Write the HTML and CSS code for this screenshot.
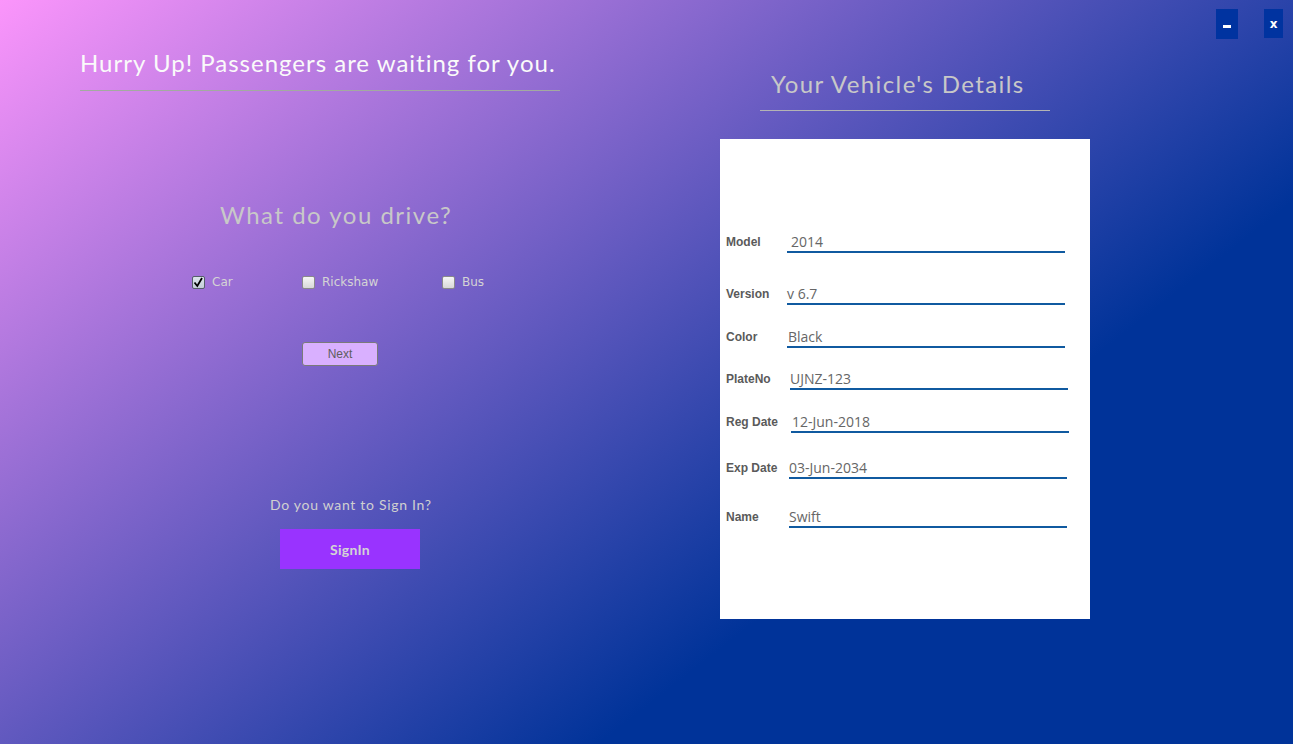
FILE: index.html
```html
<!DOCTYPE html>
<html>
<head>
<meta charset="utf-8">
<title>Driver Sign Up</title>
<link rel="stylesheet" href="styles.css">
</head>
<body>
<div class="page">
  <section class="left">
    <h1 class="title">Hurry Up! Passengers are waiting for you.</h1>
    <h2 class="question">What do you drive?</h2>
    <div class="choices">
      <label class="choice"><span class="box checked"><svg viewBox="0 0 13 13" width="13" height="13"><path d="M2.5 6.5 L5.3 10 L10 2" fill="none" stroke="#000" stroke-width="1.8"/></svg></span><span class="choice-text">Car</span></label>
      <label class="choice"><span class="box"></span><span class="choice-text">Rickshaw</span></label>
      <label class="choice"><span class="box"></span><span class="choice-text">Bus</span></label>
    </div>
    <button class="next">Next</button>
    <p class="signin-q">Do you want to Sign In?</p>
    <button class="signin">SignIn</button>
  </section>
  <section class="right">
    <h2 class="heading">Your Vehicle's Details</h2>
    <div class="panel">
      <div class="row r-model"><span class="lbl">Model</span><span class="field f-model">2014</span></div>
      <div class="row r-version"><span class="lbl">Version</span><span class="field f-version">v 6.7</span></div>
      <div class="row r-color"><span class="lbl">Color</span><span class="field f-color">Black</span></div>
      <div class="row r-plate"><span class="lbl">PlateNo</span><span class="field f-plate">UJNZ-123</span></div>
      <div class="row r-reg"><span class="lbl">Reg Date</span><span class="field f-reg">12-Jun-2018</span></div>
      <div class="row r-exp"><span class="lbl">Exp Date</span><span class="field f-exp">03-Jun-2034</span></div>
      <div class="row r-name"><span class="lbl">Name</span><span class="field f-name">Swift</span></div>
    </div>
  </section>
  <div class="controls">
    <button class="ctl ctl-min"><span class="dash"></span></button>
    <button class="ctl ctl-close">x</button>
  </div>
</div>
</body>
</html>
```

FILE: styles.css
```css
html, body {
  margin: 0;
  padding: 0;
}
body {
  width: 1293px;
  height: 744px;
  overflow: hidden;
  background: linear-gradient(142deg, #fb95fb 0px, #003399 955px);
  font-family: "Lato", "Open Sans", sans-serif;
}
.page {
  display: flex;
  height: 744px;
}
.left {
  width: 640px;
  padding: 48px 0 0 80px;
  display: flex;
  flex-direction: column;
  align-items: flex-start;
}
.title {
  margin: 0;
  width: 480px;
  padding-bottom: 12px;
  border-bottom: 1px solid #a3aaa0;
  font-weight: normal;
  font-size: 24px;
  line-height: 30px;
  letter-spacing: 1px;
  color: #fafafa;
  white-space: nowrap;
}
.question {
  margin: 109px 0 0 140px;
  font-weight: normal;
  font-size: 24px;
  line-height: 30px;
  letter-spacing: 1.5px;
  color: #c8c8c8;
}
.choices {
  margin: 44px 0 0 112px;
  display: grid;
  grid-template-columns: 110px 140px auto;
  font-family: "DejaVu Sans", sans-serif;
  font-size: 12px;
  color: #d4d4d4;
}
.choice {
  display: flex;
  align-items: center;
  gap: 7px;
  height: 16px;
}
.box {
  width: 11px;
  height: 11px;
  border: 1px solid #8a8a8a;
  border-radius: 2px;
  background: linear-gradient(#f6f6f6, #d8d8d8);
  position: relative;
}
.box.checked {
  background: linear-gradient(#dce4ec, #c4ced8);
  border-color: #55606a;
}
.box svg {
  position: absolute;
  left: -1px;
  top: -1px;
}
.next {
  margin: 52px 0 0 222px;
  width: 76px;
  height: 24px;
  background: #d9b0ff;
  border: 1px solid #7a7a7a;
  border-radius: 3px;
  font-family: "Liberation Sans", sans-serif;
  font-size: 12px;
  color: #5e5e5e;
  padding: 0;
}
.signin-q {
  margin: 130px 0 0 190px;
  font-size: 14px;
  line-height: 18px;
  letter-spacing: 0.7px;
  color: #d0d0d0;
}
.signin {
  margin: 15px 0 0 200px;
  width: 140px;
  height: 40px;
  background: #9933ff;
  border: none;
  font-family: "Lato", sans-serif;
  font-weight: bold;
  font-size: 14px;
  letter-spacing: 0.3px;
  color: #d4d4d4;
  padding: 0;
}
.right {
  width: 370px;
  display: flex;
  flex-direction: column;
  align-items: flex-start;
  padding-top: 69px;
}
.heading {
  margin: 0 0 0 40px;
  width: 279px;
  padding: 0 0 11px 11px;
  border-bottom: 1px solid #b4b4b4;
  font-weight: normal;
  font-size: 24px;
  line-height: 30px;
  letter-spacing: 1.4px;
  color: #c8c8c8;
  white-space: nowrap;
}
.panel {
  margin-top: 28px;
  width: 364px;
  height: 480px;
  background: #ffffff;
  padding-left: 6px;
  display: flex;
  flex-direction: column;
}
.row {
  display: flex;
  align-items: center;
}
.lbl {
  font-family: "Liberation Sans", sans-serif;
  font-weight: bold;
  font-size: 12px;
  color: #5a5a5a;
  width: 61px;
  white-space: nowrap;
}
.field {
  box-sizing: border-box;
  height: 23px;
  line-height: 23px;
  width: 278px;
  border-bottom: 2px solid #105aa0;
  font-family: "Open Sans", sans-serif;
  font-size: 14px;
  color: #666666;
}
.r-model { margin-top: 91px; }
.r-version { margin-top: 29px; }
.r-color { margin-top: 20px; }
.r-plate { margin-top: 19px; }
.r-reg { margin-top: 20px; }
.r-exp { margin-top: 23px; }
.r-name { margin-top: 26px; }
.f-model { padding-left: 4px; }
.f-version { padding-left: 0; }
.f-color { padding-left: 1px; }
.f-plate { margin-left: 3px; }
.f-reg { margin-left: 4px; padding-left: 1px; }
.f-exp { margin-left: 2px; }
.f-name { margin-left: 2px; }
.controls {
  flex: 1;
  display: flex;
  justify-content: flex-end;
  align-items: flex-start;
  gap: 26px;
  padding: 9px 10px 0 0;
}
.ctl {
  background: #0033a0;
  border: none;
  padding: 0;
  color: #ffffff;
  display: flex;
  align-items: center;
  justify-content: center;
}
.ctl-min {
  width: 22px;
  height: 30px;
}
.dash {
  width: 8px;
  height: 3px;
  background: #ffffff;
  margin-top: 4px;
}
.ctl-close {
  width: 19px;
  height: 29px;
  font-family: "DejaVu Sans", sans-serif;
  font-weight: bold;
  font-size: 12px;
}
```
